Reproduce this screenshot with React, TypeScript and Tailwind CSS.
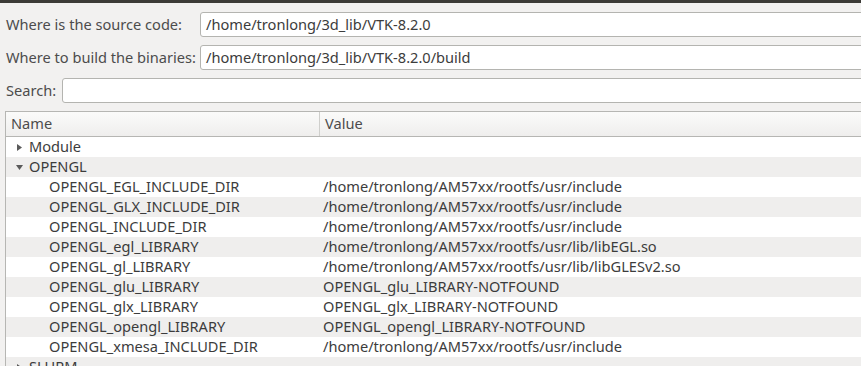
const rows: { name: string; value: string; kind: "group" | "open" | "item" }[] = [
  { name: "Module", value: "", kind: "group" },
  { name: "OPENGL", value: "", kind: "open" },
  { name: "OPENGL_EGL_INCLUDE_DIR", value: "/home/tronlong/AM57xx/rootfs/usr/include", kind: "item" },
  { name: "OPENGL_GLX_INCLUDE_DIR", value: "/home/tronlong/AM57xx/rootfs/usr/include", kind: "item" },
  { name: "OPENGL_INCLUDE_DIR", value: "/home/tronlong/AM57xx/rootfs/usr/include", kind: "item" },
  { name: "OPENGL_egl_LIBRARY", value: "/home/tronlong/AM57xx/rootfs/usr/lib/libEGL.so", kind: "item" },
  { name: "OPENGL_gl_LIBRARY", value: "/home/tronlong/AM57xx/rootfs/usr/lib/libGLESv2.so", kind: "item" },
  { name: "OPENGL_glu_LIBRARY", value: "OPENGL_glu_LIBRARY-NOTFOUND", kind: "item" },
  { name: "OPENGL_glx_LIBRARY", value: "OPENGL_glx_LIBRARY-NOTFOUND", kind: "item" },
  { name: "OPENGL_opengl_LIBRARY", value: "OPENGL_opengl_LIBRARY-NOTFOUND", kind: "item" },
  { name: "OPENGL_xmesa_INCLUDE_DIR", value: "/home/tronlong/AM57xx/rootfs/usr/include", kind: "item" },
  { name: "SLURM", value: "", kind: "group" },
];

function Arrow({ open }: { open: boolean }) {
  return (
    <svg width="7" height="7" viewBox="0 0 7 7" className="mr-[6px]">
      {open ? <path d="M0 1h7L3.5 6z" fill="#5a5a5a" /> : <path d="M1 0v7l5-3.5z" fill="#5a5a5a" />}
    </svg>
  );
}

function Field({ value }: { value: string }) {
  return (
    <div className="flex-1 h-[25px] bg-white border border-[#b4b4b0] rounded-[3px] flex items-center pl-[5px] -mr-[10px] text-[#3c3c3c]">
      {value}
    </div>
  );
}

export default function App() {
  return (
    <div
      className="w-[861px] h-[366px] overflow-hidden bg-[#f2f1f0] text-[14.6px] text-[#4c4c4c]"
      style={{ fontFamily: '"Noto Sans", "Open Sans", sans-serif' }}
    >
      <div className="h-[3px] bg-[#3c3b37]" />
      <div className="flex flex-col gap-[8px] pt-[9px] pl-[6px]">
        <div className="flex items-center">
          <span className="w-[194px]">Where is the source code:</span>
          <Field value="/home/tronlong/3d_lib/VTK-8.2.0" />
        </div>
        <div className="flex items-center">
          <span className="w-[194px]">Where to build the binaries:</span>
          <Field value="/home/tronlong/3d_lib/VTK-8.2.0/build" />
        </div>
        <div className="flex items-center">
          <span className="w-[56px]">Search:</span>
          <Field value="" />
        </div>
      </div>
      <div className="ml-[5px] mt-[8px] w-[900px] border-l border-t border-[#b6b6b3] bg-white">
        <div className="flex h-[25px] border-b border-[#b6b6b3] bg-gradient-to-b from-[#fbfbfa] to-[#efeeed] text-[#4c4c4c]">
          <div className="w-[314px] border-r border-[#cfcfcc] pl-[5px] flex items-center">Name</div>
          <div className="pl-[5px] flex items-center">Value</div>
        </div>
        {rows.map((r, i) => (
          <div key={r.name} className={`flex h-[20px] items-center text-[#3c3c3c] ${i % 2 === 1 ? "bg-[#efeeed]" : "bg-white"}`}>
            <div className={`w-[314px] flex items-center ${r.kind === "item" ? "pl-[43px]" : "pl-[10px]"}`}>
              {r.kind !== "item" && <Arrow open={r.kind === "open"} />}
              {r.name}
            </div>
            <div className="pl-[3px]">{r.value}</div>
          </div>
        ))}
      </div>
    </div>
  );
}
